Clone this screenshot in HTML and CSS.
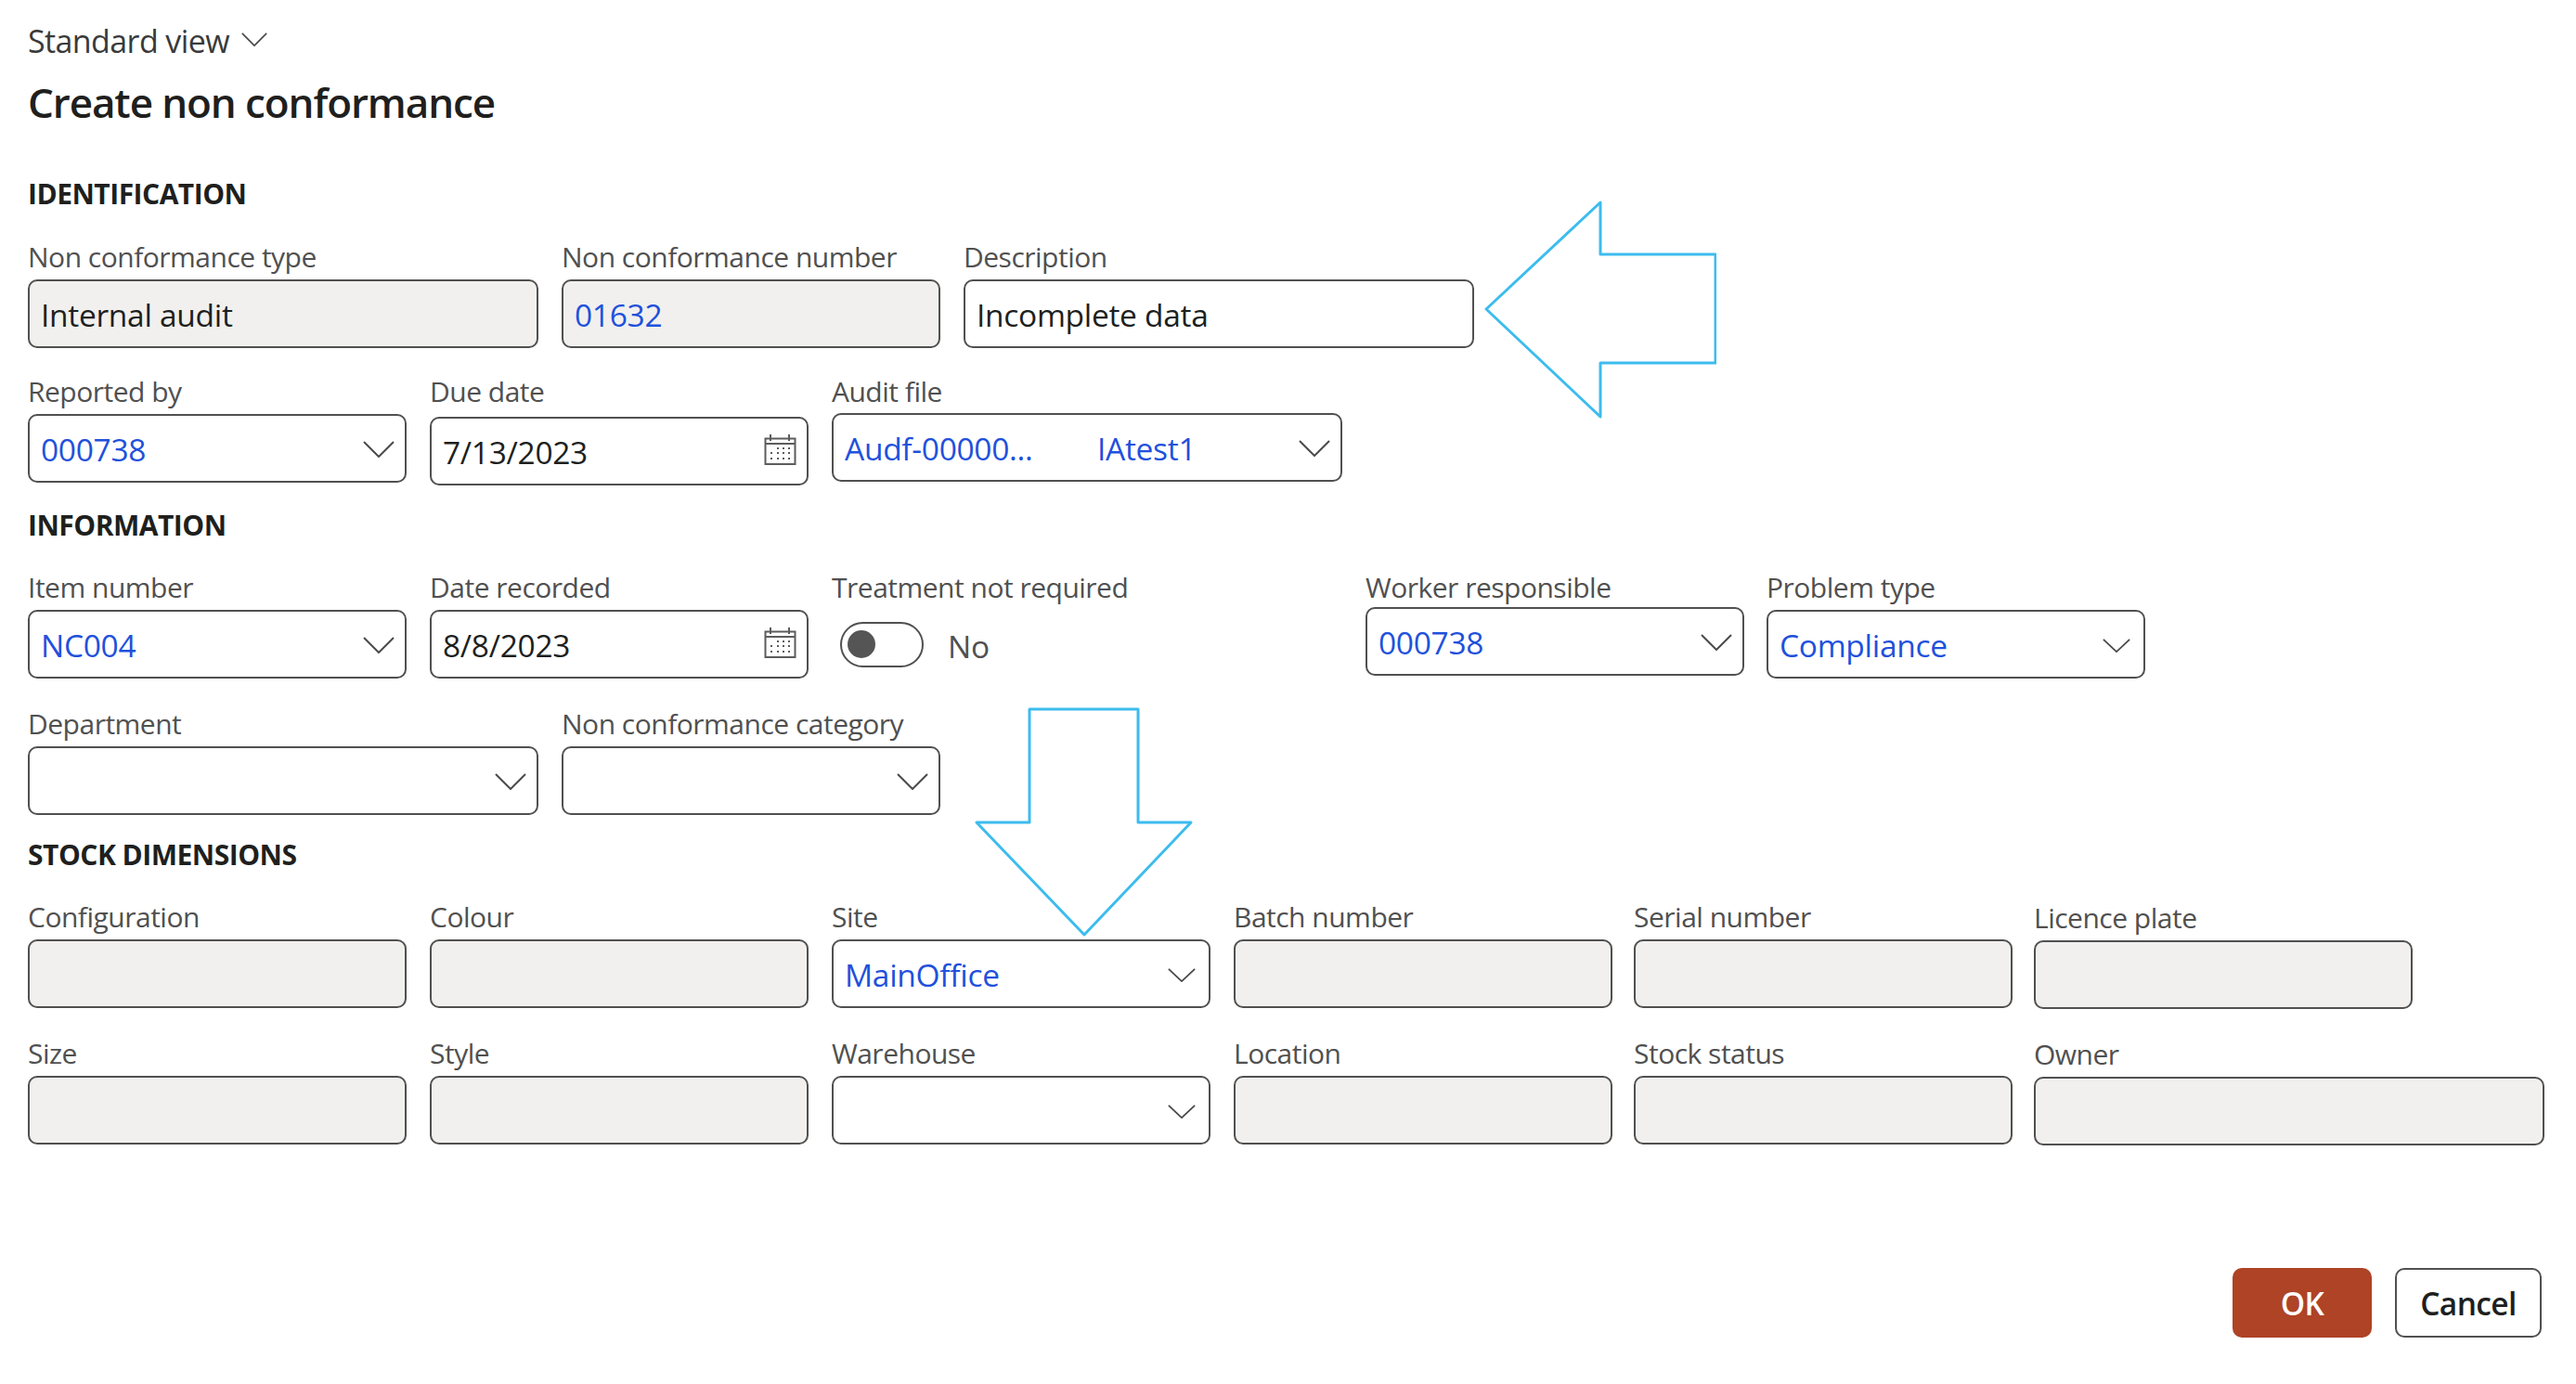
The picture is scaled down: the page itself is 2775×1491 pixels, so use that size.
FILE: index.html
```html
<!DOCTYPE html>
<html lang="en">
  <head>
    <meta charset="UTF-8" />
    <meta name="viewport" content="width=device-width, initial-scale=1.0" />
    <title>Create non conformance</title>
    <link rel="stylesheet" href="styles.css">
  </head>
  <body>
    <svg class="icon-defs" aria-hidden="true">
      <symbol id="chevron" viewBox="0 0 34 18" preserveAspectRatio="none">
        <path d="M1 1 L17 17 L33 1" fill="none" stroke="currentColor" stroke-width="2" />
      </symbol>
      <symbol id="calendar" viewBox="0 0 35 33">
        <path d="M1.5 4.5 H33.5 V32 H1.5 Z M1.5 10 H33.5" fill="none" stroke="currentColor" stroke-width="2" />
        <path d="M7 0 V7 M27 0 V7" fill="none" stroke="currentColor" stroke-width="2" />
        <path d="M14 14 h2 v2 h-2 Z M20 14 h2 v2 h-2 Z M26 14 h2 v2 h-2 Z M7 19 h2 v2 h-2 Z M14 19 h2 v2 h-2 Z M20 19 h2 v2 h-2 Z M26 19 h2 v2 h-2 Z M7 25 h2 v2 h-2 Z M14 25 h2 v2 h-2 Z M20 25 h2 v2 h-2 Z M26 25 h2 v2 h-2 Z" fill="currentColor" />
      </symbol>
    </svg>

    <main class="dialog">
      <div class="view-picker">
        <span>Standard view</span>
        <svg class="chevron chevron-view"><use href="#chevron" /></svg>
      </div>
      <h1 class="dialog-title">Create non conformance</h1>

      <h2 class="section-title section-first">IDENTIFICATION</h2>
      <div class="row row-first">
        <div class="field w-wide">
          <label class="field-label">Non conformance type</label>
          <div class="input input-locked">Internal audit</div>
        </div>
        <div class="field w-std">
          <label class="field-label">Non conformance number</label>
          <div class="input input-locked link">01632</div>
        </div>
        <div class="field w-wide">
          <label class="field-label">Description</label>
          <div class="input">Incomplete data</div>
        </div>
      </div>
      <div class="row row-gap">
        <div class="field w-std">
          <label class="field-label">Reported by</label>
          <div class="input link">000738<svg class="chevron"><use href="#chevron" /></svg></div>
        </div>
        <div class="field w-std">
          <label class="field-label">Due date</label>
          <div class="input input-low">7/13/2023<svg class="calendar"><use href="#calendar" /></svg></div>
        </div>
        <div class="field w-wide">
          <label class="field-label">Audit file</label>
          <div class="input input-high link">
            <span class="audit-id">Audf-00000...</span><span>IAtest1</span>
            <svg class="chevron"><use href="#chevron" /></svg>
          </div>
        </div>
      </div>

      <h2 class="section-title">INFORMATION</h2>
      <div class="row row-gap">
        <div class="field w-std">
          <label class="field-label">Item number</label>
          <div class="input link">NC004<svg class="chevron"><use href="#chevron" /></svg></div>
        </div>
        <div class="field w-std">
          <label class="field-label">Date recorded</label>
          <div class="input">8/8/2023<svg class="calendar"><use href="#calendar" /></svg></div>
        </div>
        <div class="field w-wide">
          <label class="field-label">Treatment not required</label>
          <div class="toggle-line">
            <span class="toggle"><span class="toggle-knob"></span></span>
            <span class="toggle-text">No</span>
          </div>
        </div>
        <div class="field w-std">
          <label class="field-label">Worker responsible</label>
          <div class="input input-raised link">000738<svg class="chevron"><use href="#chevron" /></svg></div>
        </div>
        <div class="field w-std field-nudged-small">
          <label class="field-label">Problem type</label>
          <div class="input link">Compliance<svg class="chevron chevron-small"><use href="#chevron" /></svg></div>
        </div>
      </div>
      <div class="row row-gap-large">
        <div class="field w-wide">
          <label class="field-label">Department</label>
          <div class="input"><svg class="chevron"><use href="#chevron" /></svg></div>
        </div>
        <div class="field w-std">
          <label class="field-label">Non conformance category</label>
          <div class="input"><svg class="chevron"><use href="#chevron" /></svg></div>
        </div>
      </div>

      <h2 class="section-title">STOCK DIMENSIONS</h2>
      <div class="row row-gap">
        <div class="field w-std">
          <label class="field-label">Configuration</label>
          <div class="input input-locked"></div>
        </div>
        <div class="field w-std">
          <label class="field-label">Colour</label>
          <div class="input input-locked"></div>
        </div>
        <div class="field w-std">
          <label class="field-label">Site</label>
          <div class="input link">MainOffice<svg class="chevron chevron-small"><use href="#chevron" /></svg></div>
        </div>
        <div class="field w-std">
          <label class="field-label">Batch number</label>
          <div class="input input-locked"></div>
        </div>
        <div class="field w-std field-nudged">
          <label class="field-label">Serial number</label>
          <div class="input input-locked"></div>
        </div>
        <div class="field w-std field-shifted">
          <label class="field-label">Licence plate</label>
          <div class="input input-locked"></div>
        </div>
      </div>
      <div class="row row-gap-size">
        <div class="field w-std">
          <label class="field-label">Size</label>
          <div class="input input-locked"></div>
        </div>
        <div class="field w-std">
          <label class="field-label">Style</label>
          <div class="input input-locked"></div>
        </div>
        <div class="field w-std">
          <label class="field-label">Warehouse</label>
          <div class="input"><svg class="chevron chevron-small"><use href="#chevron" /></svg></div>
        </div>
        <div class="field w-std">
          <label class="field-label">Location</label>
          <div class="input input-locked"></div>
        </div>
        <div class="field w-std field-nudged">
          <label class="field-label">Stock status</label>
          <div class="input input-locked"></div>
        </div>
        <div class="field w-wide field-shifted">
          <label class="field-label">Owner</label>
          <div class="input input-locked"></div>
        </div>
      </div>

      <div class="dialog-actions">
        <button class="btn btn-primary">OK</button>
        <button class="btn">Cancel</button>
      </div>
    </main>

    <!-- hand drawn callouts on top of the form -->
    <svg class="callout callout-left" viewBox="0 0 250 236">
      <path d="M2 118 L125 3 L125 59 L249 59 L249 176 L125 176 L125 234 Z" />
    </svg>
    <svg class="callout callout-down" viewBox="0 0 236 248">
      <path d="M59 2 L176 2 L176 124 L233 124 L118 245 L2 124 L59 124 Z" />
    </svg>
  </body>
</html>
```

FILE: styles.css
```css
:root {
  --text: #201f1e;
  --label: #505050;
  --border: #505050;
  --locked: #f1f0ee;
  --link: #1f51dc;
  --accent: #ae4326;
  --callout: #3dbcee;
}

body {
  margin: 0;
  background: #fff;
  color: var(--text);
  font-family: "Open Sans", "Noto Sans", sans-serif;
}

.icon-defs {
  display: none;
}

.dialog {
  padding: 24px 0 0 30px;
}

.view-picker {
  display: flex;
  align-items: center;
  gap: 13px;
  height: 40px;
  font-size: 34px;
  letter-spacing: -0.6px;
  color: #3a3a3a;
}

.dialog-title {
  margin: 16px 0 0;
  font-size: 44px;
  line-height: 60px;
  font-weight: 600;
  letter-spacing: -1.1px;
}

.section-title {
  margin: 23px 0 0;
  font-size: 30px;
  line-height: 40px;
  font-weight: 700;
  letter-spacing: -0.5px;
}

.section-first {
  margin-top: 49px;
}

.row {
  display: flex;
  align-items: flex-start;
  gap: 25px;
}

.row-first {
  margin-top: 27px;
}

.row-gap {
  margin-top: 26px;
}

.row-gap-large {
  margin-top: 28px;
}

.row-gap-size {
  margin-top: 27px;
}

.field {
  display: flex;
  flex-direction: column;
  flex: none;
}

.field-nudged {
  margin-left: -2px;
}

.field-nudged-small {
  margin-left: -1px;
}

.field-shifted {
  margin-top: 1px;
  margin-left: -2px;
}

.w-std {
  width: 408px;
}

.w-wide {
  width: 550px;
}

.field-label {
  height: 41px;
  margin-bottom: 4px;
  font-size: 30px;
  line-height: 42px;
  letter-spacing: -0.5px;
  color: var(--label);
  white-space: nowrap;
}

.input {
  box-sizing: border-box;
  display: flex;
  align-items: center;
  height: 74px;
  padding: 2px 11px 0 12px;
  border: 2px solid var(--border);
  border-radius: 10px;
  font-size: 33.5px;
  letter-spacing: -0.3px;
  white-space: nowrap;
}

.input-locked {
  background: var(--locked);
}

.input-low {
  margin-top: 3px;
}

.input-raised {
  margin-top: -3px;
}

.input-high {
  margin-top: -1px;
}

.link {
  color: var(--link);
}

.audit-id {
  width: 272px;
}

.chevron {
  flex: none;
  width: 34px;
  height: 18px;
  margin-left: auto;
  color: #4a4a4a;
}

.chevron-small {
  width: 30px;
  height: 15px;
  margin-right: 3px;
}

.chevron-view {
  width: 28px;
  height: 15px;
  margin: 0 0 4px;
}

.calendar {
  flex: none;
  width: 35px;
  height: 33px;
  margin: -6px 0 0 auto;
  color: #5c5c5c;
}

.toggle-line {
  display: flex;
  align-items: center;
  gap: 26px;
  height: 74px;
  padding-left: 9px;
}

.toggle {
  box-sizing: border-box;
  display: flex;
  align-items: center;
  width: 90px;
  height: 49px;
  padding-left: 6px;
  border: 2px solid var(--border);
  border-radius: 25px;
}

.toggle-knob {
  width: 30px;
  height: 30px;
  border-radius: 50%;
  background: #555;
}

.toggle-text {
  margin-top: 3px;
  font-size: 33.5px;
  letter-spacing: -0.3px;
  color: var(--label);
}

.dialog-actions {
  display: flex;
  justify-content: flex-end;
  gap: 25px;
  margin-top: 132px;
  padding-right: 37px;
}

.btn {
  box-sizing: border-box;
  width: 158px;
  height: 75px;
  border: 2px solid var(--border);
  border-radius: 10px;
  background: #fff;
  color: var(--text);
  font-family: inherit;
  font-size: 33.5px;
  font-weight: 600;
  letter-spacing: -0.6px;
}

.btn-primary {
  width: 150px;
  border: none;
  background: var(--accent);
  color: #fff;
}

.callout {
  position: absolute;
  fill: none;
  stroke: var(--callout);
  stroke-width: 3;
  stroke-linejoin: round;
}

.callout-left {
  left: 1599px;
  top: 215px;
  width: 250px;
  height: 236px;
}

.callout-down {
  left: 1050px;
  top: 762px;
  width: 236px;
  height: 248px;
}
```
